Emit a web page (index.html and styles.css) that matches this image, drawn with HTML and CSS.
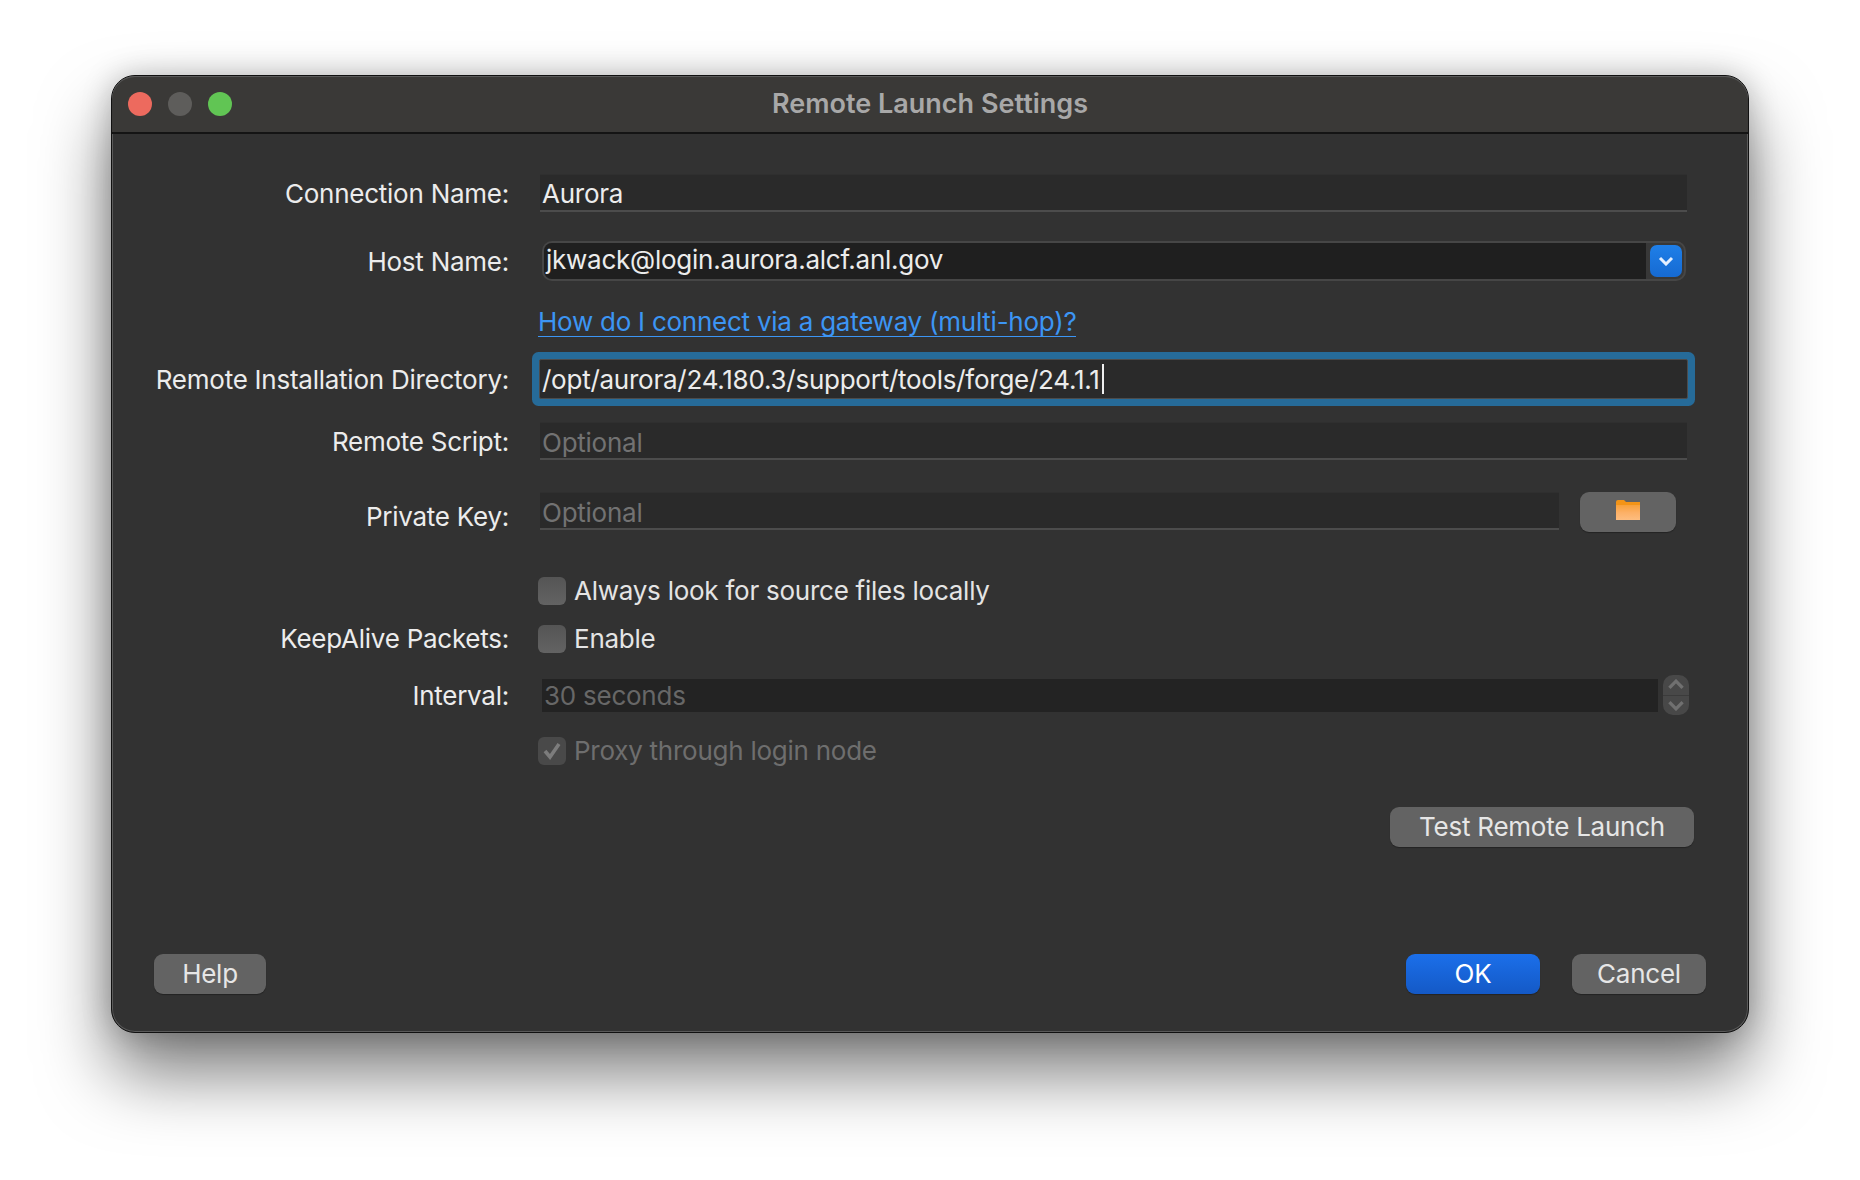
FILE: index.html
```html
<!DOCTYPE html>
<html lang="en">
<head>
<meta charset="UTF-8">
<title>Remote Launch Settings</title>
<link rel="stylesheet" href="styles.css">
</head>
<body>
<div class="window">
  <div class="titlebar">
    <div class="lights">
      <span class="light light-red"></span>
      <span class="light light-grey"></span>
      <span class="light light-green"></span>
    </div>
    <div class="title">Remote Launch Settings</div>
  </div>

  <div class="form">
    <div class="row row-connection">
      <div class="label">Connection Name:</div>
      <div class="field">Aurora</div>
    </div>

    <div class="row row-host">
      <div class="label">Host Name:</div>
      <div class="combo">
        <div class="combo-text">jkwack@login.aurora.alcf.anl.gov</div>
        <div class="combo-btn">
          <svg width="16" height="10" viewBox="0 0 16 10"><path d="M2 2 L8 8 L14 2" fill="none" stroke="#e4efff" stroke-width="3"/></svg>
        </div>
      </div>
    </div>

    <div class="row row-link">
      <div class="label"></div>
      <a class="link">How do I connect via a gateway (multi-hop)?</a>
    </div>

    <div class="row row-install">
      <div class="label">Remote Installation Directory:</div>
      <div class="field field-focus">/opt/aurora/24.180.3/support/tools/forge/24.1.1<span class="caret"></span></div>
    </div>

    <div class="row row-script">
      <div class="label">Remote Script:</div>
      <div class="field field-empty">Optional</div>
    </div>

    <div class="row row-key">
      <div class="label label-low">Private Key:</div>
      <div class="field field-empty field-key">Optional</div>
      <div class="btn btn-folder">
        <svg width="24" height="20" viewBox="0 0 24 20">
          <defs>
            <linearGradient id="folderFill" x1="0" y1="0" x2="0" y2="1">
              <stop offset="0" stop-color="#f8a13a"/>
              <stop offset="0.5" stop-color="#fcb066"/>
              <stop offset="1" stop-color="#fdbd80"/>
            </linearGradient>
          </defs>
          <path d="M0 2 Q0 0 2 0 H8 L10 2 H24 V20 H0 Z" fill="#f39417"/>
          <rect x="0" y="5" width="24" height="15" fill="url(#folderFill)"/>
        </svg>
      </div>
    </div>

    <div class="row row-local">
      <div class="label"></div>
      <span class="check"></span>
      <span class="check-label">Always look for source files locally</span>
    </div>

    <div class="row row-keepalive">
      <div class="label">KeepAlive Packets:</div>
      <span class="check"></span>
      <span class="check-label">Enable</span>
    </div>

    <div class="row row-interval">
      <div class="label">Interval:</div>
      <div class="spin-field">30 seconds</div>
      <div class="stepper">
        <div class="step">
          <svg width="18" height="11" viewBox="0 0 16 10"><path d="M2 8 L8 2 L14 8" fill="none" stroke="#707070" stroke-width="3"/></svg>
        </div>
        <div class="step step-down">
          <svg width="18" height="11" viewBox="0 0 16 10"><path d="M2 2 L8 8 L14 2" fill="none" stroke="#707070" stroke-width="3"/></svg>
        </div>
      </div>
    </div>

    <div class="row row-proxy">
      <div class="label"></div>
      <span class="check check-off">
        <svg width="20" height="20" viewBox="0 0 20 20"><path d="M3 10 L8 16 L17 3" fill="none" stroke="#7c7c7c" stroke-width="3.6"/></svg>
      </span>
      <span class="check-label label-off">Proxy through login node</span>
    </div>

    <div class="row row-test">
      <div class="btn btn-test">Test Remote Launch</div>
    </div>
  </div>

  <div class="footer">
    <div class="btn btn-help">Help</div>
    <div class="footer-right">
      <div class="btn btn-ok">OK</div>
      <div class="btn btn-cancel">Cancel</div>
    </div>
  </div>
</div>
</body>
</html>
```

FILE: styles.css
```css
* {
  box-sizing: border-box;
}
body {
  margin: 0;
  width: 1860px;
  height: 1180px;
  padding: 75px 111px 0 111px;
  overflow: hidden;
  background-color: #fff;
  font-family: Inter, "Noto Sans", sans-serif;
  font-size: 26px;
  letter-spacing: -0.25px;
  color: #ececec;
}
.window {
  height: 958px;
  border: 1px solid #111;
  border-radius: 24px;
  background-color: #323232;
  box-shadow: inset 0 0 0 1px #5a5a5a, 0 40px 70px rgba(0, 0, 0, 0.52), 0 0 30px rgba(0, 0, 0, 0.22);
  display: flex;
  flex-direction: column;
}
.titlebar {
  height: 58px;
  flex-shrink: 0;
  border-bottom: 2px solid #141414;
  border-radius: 23px 23px 0 0;
  background-color: #3a3937;
  box-shadow: inset 0 1px 0 #5a5a5a;
  display: flex;
  align-items: center;
  position: relative;
}
.lights {
  display: flex;
  gap: 16px;
  padding-left: 16px;
}
.light {
  width: 24px;
  height: 24px;
  border-radius: 50%;
}
.light-red {
  background-color: #ed6a5e;
}
.light-grey {
  background-color: #5e5d5b;
}
.light-green {
  background-color: #61c554;
}
.title {
  position: absolute;
  left: 0;
  right: 0;
  padding-bottom: 2px;
  text-align: center;
  font-size: 27px;
  font-weight: 600;
  letter-spacing: 0;
  color: #a8a8a8;
}
.form {
  flex: 1;
  display: flex;
  flex-direction: column;
}
.row {
  display: flex;
  align-items: center;
  flex-shrink: 0;
}
.label {
  width: 397px;
  flex-shrink: 0;
  text-align: right;
}
.label-low {
  padding-top: 9px;
}
.field {
  height: 38px;
  width: 1147px;
  margin-left: 31px;
  padding: 3px 0 0 2px;
  display: flex;
  align-items: center;
  background-color: #2a2a2a;
  border-top: 1px solid #2f2f2f;
  border-bottom: 2px solid #4c4c4c;
  white-space: nowrap;
}
.row-connection {
  margin-top: 40px;
}
.row-connection .field {
  padding-top: 2px;
}
.row-host {
  margin-top: 29px;
}
.combo {
  width: 1144px;
  height: 40px;
  margin-left: 33px;
  display: flex;
  align-items: center;
  justify-content: space-between;
  border: 2px solid #464646;
  border-radius: 10px;
  background-color: #383838;
  overflow: hidden;
}
.combo-text {
  width: calc(100% - 38px);
  height: 36px;
  padding: 0 0 4px 2px;
  display: flex;
  align-items: center;
  background-color: #1f1f1f;
}
.combo-btn {
  width: 32px;
  height: 32px;
  margin-right: 2px;
  border-radius: 7px;
  background: linear-gradient(#1f7fe8, #166ad2);
  display: flex;
  align-items: center;
  justify-content: center;
}
.row-link {
  margin-top: 24px;
  height: 32px;
}
.link {
  margin-left: 29px;
  padding-top: 2px;
  color: #3c95f4;
  text-decoration: none;
  border-bottom: 1px solid #3c95f4;
  line-height: 29px;
}
.row-install {
  margin-top: 22px;
}
.field-focus {
  height: 40px;
  padding: 0 0 0 2px;
  border: 1px solid #4c4c4c;
  border-radius: 2px;
  box-shadow: 0 0 0 7px #266b99;
  background-color: #2a2a2a;
  width: 1149px;
  margin-left: 30px;
}
.caret {
  width: 2px;
  height: 30px;
  margin-left: 2px;
  background-color: #eee;
}
.row-script {
  margin-top: 23px;
}
.field-empty {
  color: #727272;
}
.row-key {
  margin-top: 32px;
  align-items: flex-start;
}
.field-key {
  width: 1019px;
}
.btn {
  height: 40px;
  padding-bottom: 2px;
  border-radius: 9px;
  background-color: #636363;
  box-shadow: 0 1px 1px rgba(0, 0, 0, 0.3);
  display: flex;
  align-items: center;
  justify-content: center;
  color: #e6e6e6;
}
.btn-folder {
  width: 96px;
  margin-left: 21px;
  padding-bottom: 4px;
}
.check {
  width: 28px;
  height: 28px;
  flex-shrink: 0;
  margin-left: 29px;
  border-radius: 6px;
  background: linear-gradient(#555, #636363);
  display: flex;
  align-items: center;
  justify-content: center;
}
.check-off {
  background: #494949;
}
.check-label {
  margin-left: 8px;
  color: #e4e4e4;
}
.label-off {
  color: #6e6e6e;
}
.row-local {
  margin-top: 43px;
}
.row-keepalive {
  margin-top: 17px;
}
.row-interval {
  margin-top: 21px;
}
.spin-field {
  width: 1116px;
  height: 33px;
  margin-left: 33px;
  padding-left: 2px;
  display: flex;
  align-items: center;
  background-color: #232323;
  color: #676767;
}
.stepper {
  width: 26px;
  height: 40px;
  margin-left: 5px;
  border-radius: 10px;
  background-color: #484848;
  display: flex;
  flex-direction: column;
}
.step {
  flex: 1;
  display: flex;
  align-items: center;
  justify-content: center;
}
.step-down {
  border-top: 1px solid #3b3b3b;
}
.row-proxy {
  margin-top: 20px;
}
.row-test {
  margin-top: 41px;
  justify-content: flex-end;
  padding-right: 54px;
}
.btn-test {
  width: 304px;
}
.footer {
  display: flex;
  justify-content: space-between;
  padding: 0 42px 38px 42px;
}
.footer-right {
  display: flex;
  gap: 32px;
}
.btn-help {
  width: 112px;
}
.btn-ok {
  width: 134px;
  background: linear-gradient(#1b6fea, #1459c6);
  color: #fff;
}
.btn-cancel {
  width: 134px;
}
```
